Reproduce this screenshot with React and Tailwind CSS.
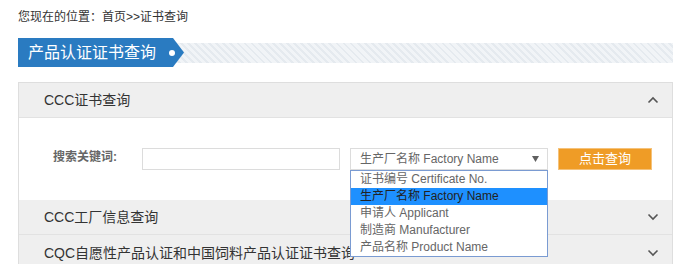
import React from "react";

function ChevronUp() {
  return (
    <svg width="12" height="8" viewBox="0 0 12 8" className="block">
      <path d="M1.5 6.5 L6 2 L10.5 6.5" fill="none" stroke="#555" strokeWidth="1.6" />
    </svg>
  );
}
function ChevronDown() {
  return (
    <svg width="12" height="8" viewBox="0 0 12 8" className="block">
      <path d="M1.5 1.5 L6 6 L10.5 1.5" fill="none" stroke="#555" strokeWidth="1.6" />
    </svg>
  );
}
function Caret() {
  return (
    <svg width="7" height="6" viewBox="0 0 7 6" className="block">
      <path d="M0 0 H7 L3.5 6 Z" fill="#606060" />
    </svg>
  );
}

const options = [
  "证书编号 Certificate No.",
  "生产厂名称 Factory Name",
  "申请人 Applicant",
  "制造商 Manufacturer",
  "产品名称 Product Name",
];

export default function App() {
  return (
    <div className="w-[680px] h-[264px] overflow-hidden bg-white font-['Liberation_Sans','Noto_Sans_CJK_SC',sans-serif]">
      <div className="h-[38px] pl-[18px] pt-[9px] text-[12px] leading-[17px] text-[#333]">
        您现在的位置：首页&gt;&gt;证书查询
      </div>
      <div className="ml-[18px] mr-[7px] h-[29px] flex items-center">
        <div className="relative z-10 w-[166px] h-[29px] bg-[#2a7bc1] flex items-center justify-between pl-[10px] pr-[9px] [clip-path:polygon(0_0,155px_0,166px_50%,155px_100%,0_100%)]">
          <span className="text-white text-[16px] leading-[29px]">产品认证证书查询</span>
          <span className="w-[6px] h-[6px] rounded-full bg-white" />
        </div>
        <div className="flex-1 h-[20px] -ml-[10px] bg-[repeating-linear-gradient(45deg,#f1f4f7_0px,#f1f4f7_3px,#e5eaef_3px,#e5eaef_5px)]" />
      </div>
      <div className="ml-[18px] mr-[7px] mt-[15px] border border-[#dedede]">
        <div className="h-[35px] bg-[#efefef] border-b border-[#e2e2e2] flex items-center justify-between pl-[25px] pr-[13px]">
          <span className="text-[14px] text-[#333] leading-[20px]">CCC证书查询</span>
          <ChevronUp />
        </div>
        <div className="h-[82px] bg-white pt-[30px] pl-[34px] flex items-start">
          <span className="w-[89px] text-[12px] font-bold text-[#666] leading-[22px] -mt-[2px]">搜索关键词:</span>
          <div className="w-[198px] h-[22px] border border-[#dcdcdc] bg-white" />
          <div className="relative ml-[10px] w-[198px]">
            <div className="h-[22px] border border-[#dcdcdc] bg-white flex items-center justify-between pl-[9px] pr-[8px]">
              <span className="text-[12px] text-[#666] leading-[20px]">生产厂名称 Factory Name</span>
              <Caret />
            </div>
            <div className="absolute left-0 top-[22px] z-20 w-[198px] border border-[#7a9bd2] bg-white">
              {options.map((o, i) => (
                <div
                  key={o}
                  className={
                    i === 1
                      ? "h-[17px] leading-[17px] pl-[9px] text-[12px] bg-[#1e90ff] text-[#222]"
                      : "h-[17px] leading-[17px] pl-[9px] text-[12px] text-[#666]"
                  }
                >
                  {o}
                </div>
              ))}
            </div>
          </div>
          <button className="ml-[10px] w-[94px] h-[22px] bg-[#ef9c26] border border-[#f5c27a] text-white text-[13px] leading-[20px]">
            点击查询
          </button>
        </div>
        <div className="h-[35px] bg-[#efefef] border-b border-[#e2e2e2] flex items-center justify-between pl-[25px] pr-[13px]">
          <span className="text-[14px] text-[#333] leading-[20px]">CCC工厂信息查询</span>
          <ChevronDown />
        </div>
        <div className="h-[35px] bg-[#efefef] flex items-center justify-between pl-[25px] pr-[13px]">
          <span className="text-[14px] text-[#333] leading-[20px]">CQC自愿性产品认证和中国饲料产品认证证书查询</span>
          <ChevronDown />
        </div>
      </div>
    </div>
  );
}
